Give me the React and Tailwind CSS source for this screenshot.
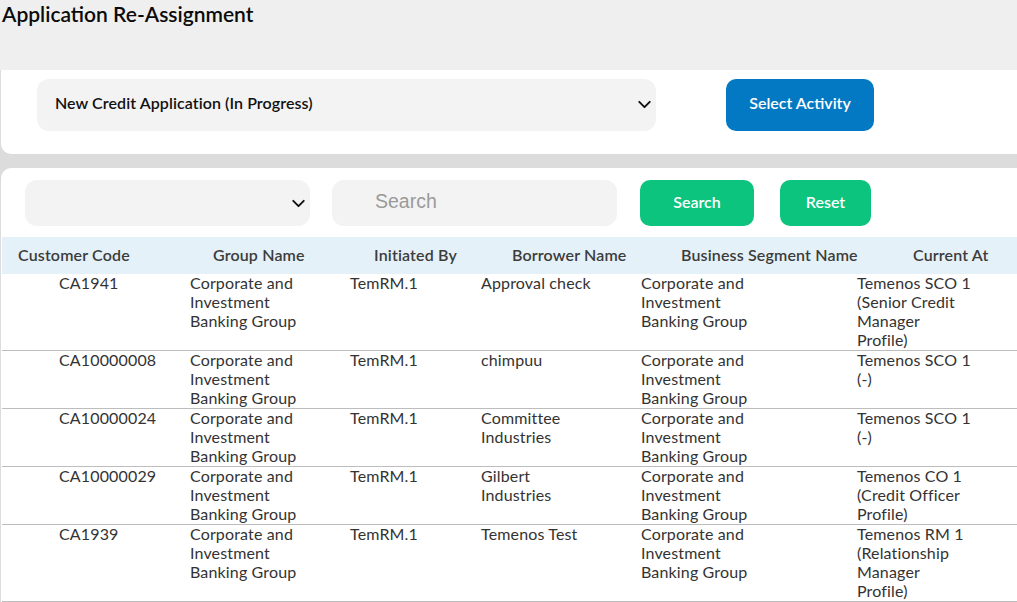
import { useState } from 'react';
import { ChevronDown } from 'lucide-react';

const rows = [
  { code: 'CA1941', initiated: 'TemRM.1', borrower: 'Approval check', at: 'Temenos SCO 1 (Senior Credit Manager Profile)' },
  { code: 'CA10000008', initiated: 'TemRM.1', borrower: 'chimpuu', at: 'Temenos SCO 1 (-)' },
  { code: 'CA10000024', initiated: 'TemRM.1', borrower: 'Committee Industries', at: 'Temenos SCO 1 (-)' },
  { code: 'CA10000029', initiated: 'TemRM.1', borrower: 'Gilbert Industries', at: 'Temenos CO 1 (Credit Officer Profile)' },
  { code: 'CA1939', initiated: 'TemRM.1', borrower: 'Temenos Test', at: 'Temenos RM 1 (Relationship Manager Profile)' },
];

const groupName = 'Corporate and Investment Banking Group';

const Cell = ({ className = '', children }) => (
  <td className={`pb-[1px] ${className}`}>
    <div className="-mt-[1px]">{children}</div>
  </td>
);

const App = () => {
  const [activity, setActivity] = useState('new');

  return (
    <div className="h-[602px] w-[1017px] overflow-hidden bg-[#efefef] font-['Lato','Open_Sans',sans-serif] text-black">
      <h1 className="h-[70px] pl-[2px] text-[21px] font-semibold leading-[28px] text-[#0b0b0b]">Application Re-Assignment</h1>

      <div className="bg-[#dcdcdc]">
        {/* Activity picker */}
        <div className="ml-[1px] flex h-[84px] items-start rounded-bl-[10px] bg-white pl-[36px] pt-[9px]">
          <div className="relative h-[52px] w-[619px]">
            <select
              value={activity}
              onChange={(e) => setActivity(e.target.value)}
              className="h-full w-full appearance-none rounded-[12px] border-0 bg-[#f3f3f3] pb-[4px] pl-[18px] text-[16px] font-semibold tracking-[0.08px] text-[#111]"
            >
              <option value="new">New Credit Application (In Progress)</option>
            </select>
            <ChevronDown size={21} strokeWidth={2.2} className="pointer-events-none absolute right-[1px] top-[15px] text-[#111]" />
          </div>
          <button className="ml-[70px] h-[52px] w-[148px] rounded-[10px] bg-[#0379c4] pb-[5px] text-[16px] font-semibold text-white">Select Activity</button>
        </div>

        {/* Search + table */}
        <div className="ml-[1px] mt-[14px] rounded-tl-[10px] bg-white pt-[12px]">
          <div className="flex h-[46px] items-stretch pl-[24px]">
            <div className="relative w-[285px]">
              <select className="h-full w-full appearance-none rounded-[12px] border-0 bg-[#f3f3f3] text-[16px]">
                <option value=""></option>
              </select>
              <ChevronDown size={21} strokeWidth={2.2} className="pointer-events-none absolute right-[1px] top-[13px] text-[#111]" />
            </div>
            <input
              placeholder="Search"
              className="ml-[22px] w-[285px] rounded-[12px] bg-[#f3f3f3] pb-[2px] pl-[43px] font-['Liberation_Sans',sans-serif] text-[19.5px] outline-none placeholder:text-[#9a9a9a]"
            />
            <button className="ml-[23px] w-[114px] rounded-[10px] bg-[#0cc47e] pb-[2px] text-[16px] font-semibold text-white">Search</button>
            <button className="ml-[26px] w-[91px] rounded-[10px] bg-[#0cc47e] pb-[2px] text-[16px] font-semibold text-white">Reset</button>
          </div>

          <table className="ml-[1px] mt-[11px] w-[1015px] table-fixed border-collapse text-[16px] leading-[19px] tracking-[0.15px] text-[#333]">
            <colgroup>
              <col className="w-[188px]" />
              <col className="w-[160px]" />
              <col className="w-[131px]" />
              <col className="w-[160px]" />
              <col className="w-[216px]" />
              <col className="w-[160px]" />
            </colgroup>
            <thead>
              <tr className="h-[37px] bg-[#e5f1f8] text-left font-semibold text-[#3c3c3c]">
                <th className="pb-[2px] pl-[16px] font-semibold">Customer Code</th>
                <th className="pb-[2px] pl-[23px] font-semibold">Group Name</th>
                <th className="pb-[2px] pl-[24px] font-semibold">Initiated By</th>
                <th className="pb-[2px] pl-[31px] font-semibold">Borrower Name</th>
                <th className="whitespace-nowrap pb-[2px] pl-[40px] font-semibold">Business Segment Name</th>
                <th className="pb-[2px] pl-[56px] font-semibold">Current At</th>
              </tr>
            </thead>
            <tbody>
              {rows.map((row) => (
                <tr key={row.code} className="border-b border-[#bdbdbd] align-top">
                  <Cell className="pl-[57px]">{row.code}</Cell>
                  <Cell className="pr-[40px]">{groupName}</Cell>
                  <Cell>{row.initiated}</Cell>
                  <Cell className="pr-[40px]">{row.borrower}</Cell>
                  <Cell className="pr-[90px]">{groupName}</Cell>
                  <Cell className="pr-[44px]">{row.at}</Cell>
                </tr>
              ))}
            </tbody>
          </table>
        </div>
      </div>
    </div>
  );
};

export default App;
